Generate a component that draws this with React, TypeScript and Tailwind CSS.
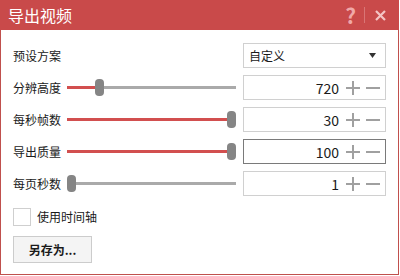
import type { FC } from "react";

const font = { fontFamily: '"Noto Sans CJK SC", "Noto Sans", sans-serif' };

const Stepper: FC<{ value: string; focused?: boolean }> = ({ value, focused }) => (
  <div
    className={`w-[143px] h-[25px] flex items-center justify-end pr-[5px] bg-white border ${
      focused ? "border-[#7a7a7a]" : "border-[#d0d0d0]"
    }`}
  >
    <span className="text-[14px] text-[#1a1a1a] mr-[7px] leading-none">{value}</span>
    <svg width="14" height="14" viewBox="0 0 14 14" className="mr-[6px]" shapeRendering="crispEdges">
      <path d="M0 7h14M7 0v14" stroke="#a0a0a0" strokeWidth="2" />
    </svg>
    <svg width="14" height="14" viewBox="0 0 14 14" shapeRendering="crispEdges">
      <path d="M0 7h14" stroke="#a0a0a0" strokeWidth="2" />
    </svg>
  </div>
);

const Slider: FC<{ pos: number }> = ({ pos }) => (
  <div className="relative w-[169px] h-[25px] flex items-center">
    <div className="h-[3px] bg-[#d24f4f]" style={{ width: pos }} />
    <div className="h-[3px] flex-1 bg-[#aaaaaa]" />
    <div
      className="absolute top-[4px] w-[9px] h-[17px] rounded-[4px] bg-[#858585]"
      style={{ left: pos }}
    />
  </div>
);

const rows = [
  { label: "分辨高度", value: "720", pos: 28 },
  { label: "每秒帧数", value: "30", pos: 160 },
  { label: "导出质量", value: "100", pos: 160, focused: true },
  { label: "每页秒数", value: "1", pos: 0 },
];

const App: FC = () => {
  return (
    <div className="w-[400px] h-[276px] bg-white" style={font}>
      <div className="w-[399px] h-[275px] flex flex-col">
        <div className="h-[30px] bg-[#c94a4a] flex items-center pl-[8px] pr-[10px]">
          <span className="text-white text-[16px] leading-none flex-1">导出视频</span>
          <span className="text-[#f0a8a8] text-[21px] font-bold leading-none mr-[8px]">?</span>
          <div className="w-px h-[16px] bg-[#d97575] mr-[10px]" />
          <svg width="11" height="11" viewBox="0 0 11 11" className="mr-[3px]">
            <path d="M1 1l9 9M10 1l-9 9" stroke="#f4c4c4" strokeWidth="2.2" />
          </svg>
        </div>
        <div className="flex-1 border-l border-r border-b border-[#c0504d] pl-[12px] pr-[12px] pt-[13px] flex flex-col text-[12px] text-[#1a1a1a]">
          <div className="flex items-center h-[25px]">
            <span className="flex-1">预设方案</span>
            <div className="w-[143px] h-[25px] border border-[#d0d0d0] flex items-center pl-[5px] pr-[9px]">
              <span className="flex-1">自定义</span>
              <svg width="7" height="5" viewBox="0 0 7 5">
                <path d="M0 0h7L3.5 5z" fill="#333" />
              </svg>
            </div>
          </div>
          <div className="flex flex-col gap-[7px] mt-[7px]">
            {rows.map((r) => (
              <div key={r.label} className="flex items-center h-[25px]">
                <span className="w-[54px]">{r.label}</span>
                <Slider pos={r.pos} />
                <div className="ml-[7px]">
                  <Stepper value={r.value} focused={r.focused} />
                </div>
              </div>
            ))}
          </div>
          <div className="flex items-center mt-[12px] h-[17px]">
            <div className="w-[18px] h-[18px] border border-[#cfcfcf] bg-white" />
            <span className="ml-[6px]">使用时间轴</span>
          </div>
          <button className="mt-[11px] w-[79px] h-[27px] bg-[#f4f4f4] border border-[#cccccc] text-[12px] font-bold text-[#1a1a1a]">
            另存为...
          </button>
        </div>
      </div>
    </div>
  );
};

export default App;
